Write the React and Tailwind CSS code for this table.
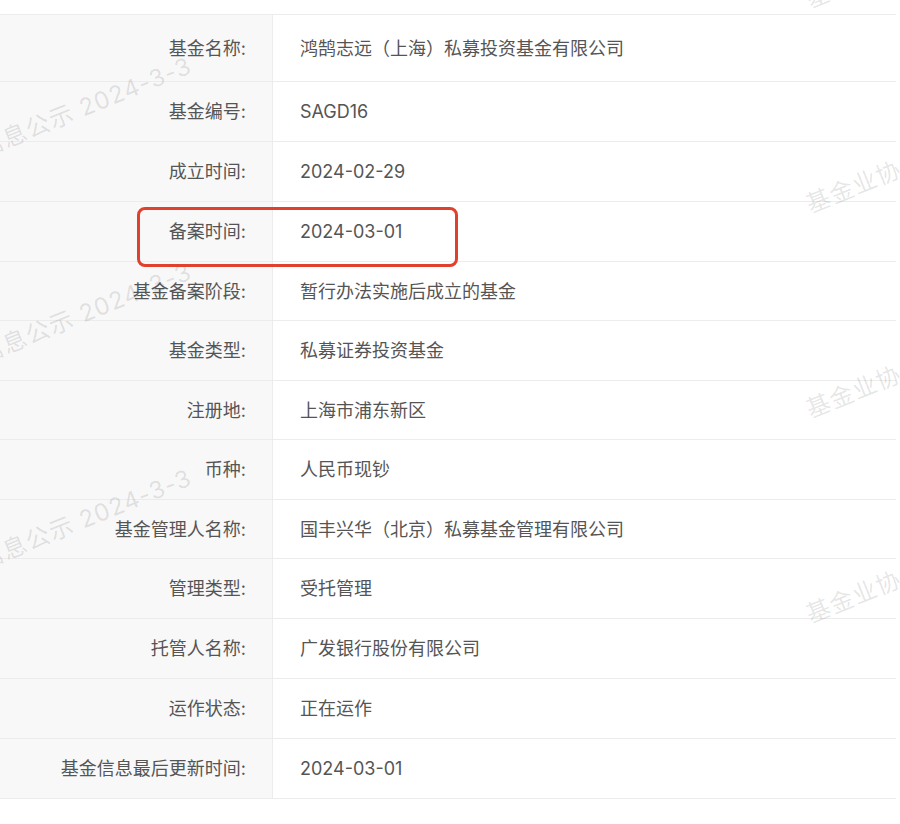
import React from 'react'

const rows = [
  ['基金名称:', '鸿鹄志远（上海）私募投资基金有限公司', 'h-[67px]'],
  ['基金编号:', 'SAGD16', 'h-[60px]'],
  ['成立时间:', '2024-02-29', 'h-[60px]'],
  ['备案时间:', '2024-03-01', 'h-[60px]'],
  ['基金备案阶段:', '暂行办法实施后成立的基金', 'h-[59px]'],
  ['基金类型:', '私募证券投资基金', 'h-[60px]'],
  ['注册地:', '上海市浦东新区', 'h-[59px]'],
  ['币种:', '人民币现钞', 'h-[60px]'],
  ['基金管理人名称:', '国丰兴华（北京）私募基金管理有限公司', 'h-[59px]'],
  ['管理类型:', '受托管理', 'h-[60px]'],
  ['托管人名称:', '广发银行股份有限公司', 'h-[60px]'],
  ['运作状态:', '正在运作', 'h-[60px]'],
  ['基金信息最后更新时间:', '2024-03-01', 'h-[60px]'],
]

const mark = '基金业协会信息公示 2024-3-3'

export default function App() {
  return (
    <div className="relative w-[900px] h-[824px] overflow-hidden bg-white font-['Inter','Noto_Sans_CJK_SC',sans-serif] text-[18px] text-[#555]">
      <div className="pt-[14px]">
        <div className="w-[896px] border-t border-[#ececec]">
          {rows.map(([label, value, h]) => (
            <div key={label} className={`flex border-b border-[#ececec] ${h}`}>
              <div className="w-[273px] shrink-0 flex items-center justify-end pr-[26px] bg-[#f8f8f8] border-r border-[#ececec]">
                {label}
              </div>
              <div className="flex items-center pl-[27px]">{value}</div>
            </div>
          ))}
        </div>
      </div>

      {/* watermark layer */}
      <div className="pointer-events-none absolute inset-0 flex justify-between text-[24px] leading-none tracking-[1px] text-black/[0.11] whitespace-nowrap">
        <div className="flex flex-col gap-[182px] pt-[52px] ml-[-225px]">
          {[0, 1, 2].map((i) => (
            <div key={i} className="h-[24px] w-[420px] text-right origin-bottom-right -rotate-[22deg]">{mark}</div>
          ))}
        </div>
        <div className="flex flex-col gap-[181px] mt-[-12px] w-[88px] shrink-0">
          {[0, 1, 2, 3].map((i) => (
            <div key={i} className="h-[24px] origin-bottom-left -rotate-[22deg]">{mark}</div>
          ))}
        </div>
      </div>

      {/* highlight box */}
      <div className="pointer-events-none absolute left-[137px] top-[207px] w-[321px] h-[60px] border-[3px] border-[#e0412d] rounded-[8px]" />
    </div>
  )
}
